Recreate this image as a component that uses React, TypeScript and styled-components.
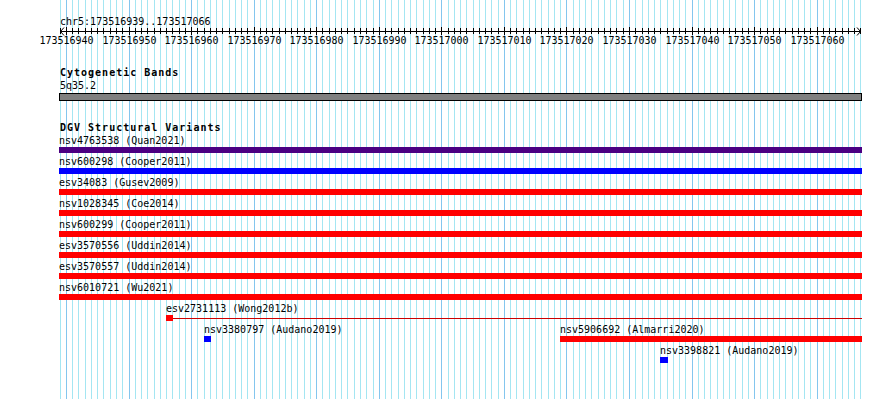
import React from "react";
import styled, { createGlobalStyle } from "styled-components";

const VIEW_START = 173516939;
const VIEW_END = 173517066;
const ORIGIN = 59.7;
const BP = 6.256;
const TRACK_LEFT = 59;
const TRACK_RIGHT = 862;

const bpX = (pos: number) => ORIGIN + (pos - VIEW_START) * BP;
const px = (x: number) => Math.round(x) + 0.5;

interface SV {
  name: string;
  study: string;
  start: number;
  end: number;
  color: string;
  tail?: boolean;
}

const FULL_START = 173516800;
const FULL_END = 173517200;

const lanes: SV[][] = [
  [{ name: "nsv4763538", study: "Quan2021", start: FULL_START, end: FULL_END, color: "#4b0082" }],
  [{ name: "nsv600298", study: "Cooper2011", start: FULL_START, end: FULL_END, color: "#0000ff" }],
  [{ name: "esv34083", study: "Gusev2009", start: FULL_START, end: FULL_END, color: "#ff0000" }],
  [{ name: "nsv1028345", study: "Coe2014", start: FULL_START, end: FULL_END, color: "#ff0000" }],
  [{ name: "nsv600299", study: "Cooper2011", start: FULL_START, end: FULL_END, color: "#ff0000" }],
  [{ name: "esv3570556", study: "Uddin2014", start: FULL_START, end: FULL_END, color: "#ff0000" }],
  [{ name: "esv3570557", study: "Uddin2014", start: FULL_START, end: FULL_END, color: "#ff0000" }],
  [{ name: "nsv6010721", study: "Wu2021", start: FULL_START, end: FULL_END, color: "#ff0000" }],
  [{ name: "esv2731113", study: "Wong2012b", start: 173516956, end: 173516956, color: "#ff0000", tail: true }],
  [
    { name: "nsv3380797", study: "Audano2019", start: 173516962, end: 173516962, color: "#0000ff" },
    { name: "nsv5906692", study: "Almarri2020", start: 173517019, end: FULL_END, color: "#ff0000" },
  ],
  [{ name: "nsv3398821", study: "Audano2019", start: 173517035, end: 173517035, color: "#0000ff" }],
];

const GlobalStyle = createGlobalStyle`
  html, body {
    margin: 0;
    padding: 0;
    background: #ffffff;
  }
`;

const Page = styled.div`
  position: relative;
  width: 890px;
  height: 399px;
  overflow: hidden;
  background: #ffffff;
  color: #000000;
  font-family: "DejaVu Sans Mono", "Liberation Mono", monospace;
  font-size: 10px;
`;

const GridLayer = styled.svg`
  position: absolute;
  left: 0;
  top: 0;
  z-index: 0;
`;

const Content = styled.div`
  position: relative;
  z-index: 1;
  display: flex;
  flex-direction: column;
`;

const RegionLabel = styled.div`
  margin: 16px 0 0 60px;
  height: 12px;
  line-height: 12px;
  white-space: nowrap;
`;

const Ruler = styled.svg`
  display: block;
  overflow: visible;

  text {
    font-family: "DejaVu Sans Mono", "Liberation Mono", monospace;
    font-size: 10px;
    fill: #000000;
  }
`;

const TrackTitle = styled.div<{ $gap: number }>`
  margin: ${(p) => p.$gap}px 0 0 60px;
  height: 13px;
  line-height: 13px;
  font-weight: bold;
  letter-spacing: 1px;
  white-space: nowrap;
`;

const BandName = styled.div`
  margin-left: 60px;
  height: 13px;
  line-height: 13px;
`;

const BandBar = styled.div`
  margin: 1px 0 0 ${TRACK_LEFT}px;
  width: ${TRACK_RIGHT - TRACK_LEFT - 2}px;
  height: 6px;
  background: #808080;
  border: 1px solid #000000;
`;

const Lane = styled.div`
  position: relative;
  height: 21px;
`;

const Feature = styled.div`
  position: absolute;
  top: 0;
  display: flex;
  flex-direction: column;
`;

const FeatureLabel = styled.span`
  height: 13px;
  line-height: 13px;
  white-space: nowrap;
`;

const GlyphRow = styled.div`
  display: flex;
  align-items: center;
  height: 6px;
`;

const Glyph = styled.div<{ $color: string }>`
  height: 6px;
  flex: none;
  background: ${(p) => p.$color};
`;

const Tail = styled.div`
  flex: 1;
  height: 1px;
  background: #cc0000;
`;

const GridLines = () => {
  const lines = [];
  for (let i = 0; i <= VIEW_END - VIEW_START + 1; i++) {
    const pos = VIEW_START + i;
    const x = px(bpX(pos));
    lines.push(
      <line
        key={i}
        x1={x}
        x2={x}
        y1={0}
        y2={399}
        stroke={pos % 10 === 0 ? "#84c6ee" : "#a4e6f2"}
        strokeWidth={1}
      />
    );
  }
  return (
    <GridLayer width={890} height={399} shapeRendering="crispEdges">
      {lines}
    </GridLayer>
  );
};

const ScaleBar = () => {
  const ticks = [];
  const labels = [];
  for (let i = 0; i <= VIEW_END - VIEW_START + 1; i++) {
    const pos = VIEW_START + i;
    const x = px(bpX(pos));
    const major = pos % 10 === 0;
    ticks.push(
      <line key={i} x1={x} x2={x} y1={major ? -1 : 0} y2={major ? 7 : 6} stroke="#000" />
    );
    if (major) {
      labels.push(
        <text key={pos} x={Math.round(bpX(pos)) + 0.5} y={16} textAnchor="middle">
          {pos}
        </text>
      );
    }
  }
  return (
    <Ruler width={890} height={20} shapeRendering="crispEdges">
      <line x1={60} x2={861} y1={3.5} y2={3.5} stroke="#000" />
      <polyline points="64,-0.5 60.5,3.5 64,7.5" fill="none" stroke="#000" shapeRendering="auto" />
      <polyline points="857,-0.5 860.5,3.5 857,7.5" fill="none" stroke="#000" shapeRendering="auto" />
      {ticks}
      {labels}
    </Ruler>
  );
};

const VariantFeature = ({ sv }: { sv: SV }) => {
  const left = Math.max(TRACK_LEFT, Math.round(bpX(sv.start)));
  const right = Math.min(TRACK_RIGHT, Math.round(bpX(sv.end + 1)) + 1);
  const boxWidth = right - left;
  return (
    <Feature style={{ left }}>
      <FeatureLabel>
        {sv.name} ({sv.study})
      </FeatureLabel>
      {sv.tail ? (
        <GlyphRow style={{ width: TRACK_RIGHT - left }}>
          <Glyph $color={sv.color} style={{ width: boxWidth }} />
          <Tail />
        </GlyphRow>
      ) : (
        <Glyph $color={sv.color} style={{ width: boxWidth }} />
      )}
    </Feature>
  );
};

export default function App() {
  return (
    <Page>
      <GlobalStyle />
      <GridLines />
      <Content>
        <RegionLabel>
          chr5:{VIEW_START}..{VIEW_END}
        </RegionLabel>
        <ScaleBar />

        <TrackTitle $gap={18}>Cytogenetic Bands</TrackTitle>
        <BandName>5q35.2</BandName>
        <BandBar />

        <TrackTitle $gap={20}>DGV Structural Variants</TrackTitle>
        {lanes.map((lane, i) => (
          <Lane key={i}>
            {lane.map((sv) => (
              <VariantFeature key={sv.name} sv={sv} />
            ))}
          </Lane>
        ))}
      </Content>
    </Page>
  );
}
